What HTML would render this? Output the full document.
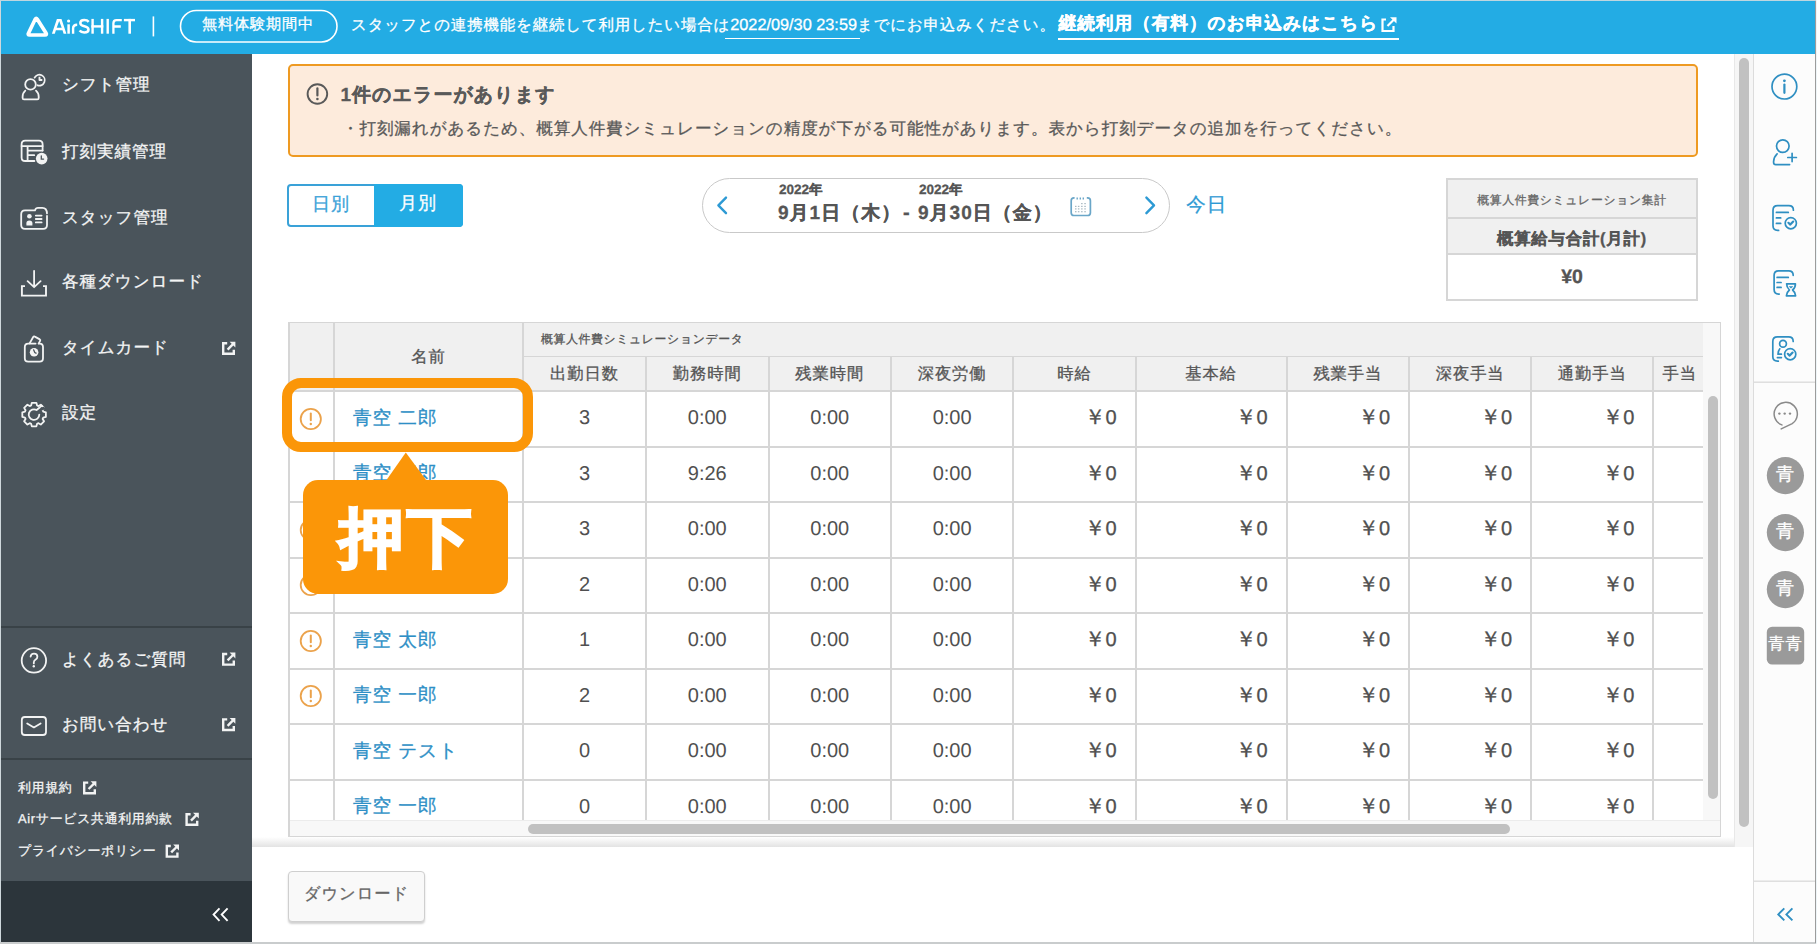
<!DOCTYPE html>
<html><head><meta charset="utf-8">
<style>
*{box-sizing:border-box;margin:0;padding:0}
html,body{width:1817px;height:944px;overflow:hidden;background:#cfd8dc;font-family:"Liberation Sans",sans-serif;text-rendering:geometricPrecision}
.a{position:absolute;white-space:nowrap;line-height:1;-webkit-text-stroke:0.3px currentColor}
.nk{-webkit-text-stroke:0}
.r{position:absolute}
.hw{color:#fff}
#hdr{left:1px;top:1px;width:1815px;height:53px;background:#23ace4}
#side{left:1px;top:54px;width:251px;height:888px;background:#4a545b}
#sidebot{left:1px;top:881px;width:251px;height:61px;background:#2c353b}
.dv{position:absolute;left:1px;width:251px;height:2px;background:#394247}
.mi{color:#f4f5f5;font-size:17.5px}
.sm{color:#f4f5f5;font-size:13.6px}
#main{left:252px;top:54px;width:1501px;height:888px;background:#fff}
#rp{left:1753px;top:54px;width:62px;height:888px;background:#fcfcfc;border-left:1px solid #dcdcdc}
#shadow{left:252px;top:837px;width:1501px;height:10px;background:linear-gradient(#fff,#e3e3e3)}
#vtrack{left:1734px;top:54px;width:19px;height:793px;background:#f6f6f6;border-left:1px solid #e8e8e8}
#vthumb{left:1739px;top:58px;width:10px;height:769px;background:#c1c1c1;border-radius:5px}
.k{-webkit-text-stroke:0.3px currentColor}
/*CSS*/
</style></head><body>
<div class="r" id="hdr"></div>
<div class="r" id="side"></div>
<div class="r" id="sidebot"></div>
<div class="dv" style="top:626px"></div>
<div class="dv" style="top:758px"></div>
<div class="r" id="main"></div>
<div class="r" style="left:287.5px;top:64px;width:1410.5px;height:93px;background:#fdebdc;border:2.7px solid #ee9a22;border-radius:5px"></div>
<svg class="r" style="left:300px;top:78px" width="36" height="32"><circle cx="17.4" cy="16" r="9.8" fill="none" stroke="#595959" stroke-width="1.9"/><path d="M17.4 10.4 V17.4" stroke="#595959" stroke-width="2.2" stroke-linecap="round"/><circle cx="17.4" cy="21" r="1.3" fill="#595959"/></svg>
<div class="a" style="left:340.5px;top:85.50px;font-size:19.00px;letter-spacing:0.0526em;font-weight:bold;color:#595959">1件のエラーがあります</div>
<div class="a" style="left:342px;top:121.44px;font-size:16.58px;letter-spacing:0.0526em;color:#595959">・打刻漏れがあるため、概算人件費シミュレーションの精度が下がる可能性があります。表から打刻データの追加を行ってください。</div>
<div class="r" style="left:287px;top:184px;width:176px;height:43px;border:2px solid #3aa2d8;border-radius:4px;background:#fff"></div>
<div class="r" style="left:374px;top:184px;width:89px;height:43px;background:#23ace4;border-radius:0 4px 4px 0"></div>
<div class="a" style="left:312px;top:194.67px;font-size:18.05px;letter-spacing:0.0526em;color:#3aa2d8">日別</div>
<div class="a" style="left:399px;top:194.47px;font-size:18.05px;letter-spacing:0.0526em;color:#fff">月別</div>
<div class="r" style="left:701.5px;top:178px;width:468px;height:55px;border:1.5px solid #c9c9c9;border-radius:28px;background:#fff"></div>
<svg class="r" style="left:700px;top:190px" width="480" height="32">
<path d="M26 7.6 L18.4 15.4 L26 23.2" fill="none" stroke="#2d9ad4" stroke-width="2.4" stroke-linecap="round" stroke-linejoin="round"/>
<path d="M446.4 7.6 L454 15.4 L446.4 23.2" fill="none" stroke="#2d9ad4" stroke-width="2.4" stroke-linecap="round" stroke-linejoin="round"/>
</svg>
<div class="a" style="left:779px;top:183px;font-size:13.5px;font-weight:bold;color:#555">2022年</div>
<div class="a" style="left:919px;top:183px;font-size:13.5px;font-weight:bold;color:#555">2022年</div>
<div class="a" style="left:778px;top:203.50px;font-size:19.00px;letter-spacing:0.0526em;font-weight:bold;color:#555">9月1日（木）</div>
<div class="a" style="left:903px;top:203px;font-size:20px;font-weight:bold;color:#555">-</div>
<div class="a" style="left:918px;top:203.50px;font-size:19.00px;letter-spacing:0.0526em;font-weight:bold;color:#555">9月30日（金）</div>
<svg class="r" style="left:1060px;top:185px" width="40" height="40">
<path d="M14.6 12.9 H14 Q11.2 12.9 11.2 15.7 V27.7 Q11.2 30.5 14 30.5 H27.6 Q30.4 30.5 30.4 27.7 V15.7 Q30.4 12.9 27.6 12.9 H26.8" fill="none" stroke="#6aa6c8" stroke-width="1.7"/>
<path d="M17.2 12.4 V14.6 M20.3 12.4 V14.6 M23.3 12.4 V14.6" stroke="#6aa6c8" stroke-width="1.4"/>
<g fill="#a9b9c2"><rect x="21.1" y="18.0" width="1.5" height="1.2"/><rect x="24.3" y="18.0" width="1.5" height="1.2"/><rect x="15.0" y="20.8" width="1.5" height="1.2"/><rect x="17.9" y="20.8" width="1.5" height="1.2"/><rect x="21.1" y="20.8" width="1.5" height="1.2"/><rect x="24.3" y="20.8" width="1.5" height="1.2"/><rect x="15.0" y="23.3" width="1.5" height="1.2"/><rect x="17.9" y="23.3" width="1.5" height="1.2"/><rect x="21.1" y="23.3" width="1.5" height="1.2"/><rect x="24.3" y="23.3" width="1.5" height="1.2"/><rect x="15.0" y="26.1" width="1.5" height="1.2"/><rect x="17.9" y="26.1" width="1.5" height="1.2"/><rect x="21.1" y="26.1" width="1.5" height="1.2"/><rect x="24.3" y="26.1" width="1.5" height="1.2"/></g>
</svg>
<div class="a" style="left:1186.3px;top:195.51px;font-size:19.47px;letter-spacing:0.0526em;color:#2d9ad4">今日</div>
<div class="r" style="left:1446px;top:178px;width:252px;height:123px;border:2px solid #d6d6d6;background:#fff"></div>
<div class="r" style="left:1448px;top:180px;width:248px;height:74px;background:#f0f0f0"></div>
<div class="r" style="left:1448px;top:216.5px;width:248px;height:2px;background:#d6d6d6"></div>
<div class="r" style="left:1448px;top:253px;width:248px;height:2px;background:#d6d6d6"></div>
<div class="a" style="left:1446px;width:252px;text-align:center;top:194.61px;font-size:11.88px;letter-spacing:0.0526em;color:#666">概算人件費シミュレーション集計</div>
<div class="a" style="left:1446px;width:252px;text-align:center;top:230.93px;font-size:16.34px;letter-spacing:0.0526em;font-weight:bold;color:#555">概算給与合計(月計)</div>
<div class="a" style="left:1446px;width:252px;text-align:center;top:267.8px;font-size:19.5px;font-weight:bold;color:#555">¥0</div>
<div class="r" style="left:288px;top:322px;width:1433px;height:515px;border:2px solid #d6d6d6;border-right-width:1px;background:#fafafa"></div>
<div class="r" style="left:290px;top:323px;width:1413px;height:68px;background:#f0f0f0"></div>
<div class="r" style="left:290px;top:391px;width:1413px;height:428.5px;background:#fff"></div>
<div class="r" style="left:333px;top:322px;width:1.5px;height:497.5px;background:#d6d6d6"></div>
<div class="r" style="left:522px;top:322px;width:1.5px;height:497.5px;background:#d6d6d6"></div>
<div class="r" style="left:645px;top:356px;width:1.5px;height:463.5px;background:#d6d6d6"></div>
<div class="r" style="left:768px;top:356px;width:1.5px;height:463.5px;background:#d6d6d6"></div>
<div class="r" style="left:890px;top:356px;width:1.5px;height:463.5px;background:#d6d6d6"></div>
<div class="r" style="left:1012px;top:356px;width:1.5px;height:463.5px;background:#d6d6d6"></div>
<div class="r" style="left:1135px;top:356px;width:1.5px;height:463.5px;background:#d6d6d6"></div>
<div class="r" style="left:1286px;top:356px;width:1.5px;height:463.5px;background:#d6d6d6"></div>
<div class="r" style="left:1408px;top:356px;width:1.5px;height:463.5px;background:#d6d6d6"></div>
<div class="r" style="left:1530px;top:356px;width:1.5px;height:463.5px;background:#d6d6d6"></div>
<div class="r" style="left:1652px;top:356px;width:1.5px;height:463.5px;background:#d6d6d6"></div>
<div class="r" style="left:523px;top:355.5px;width:1180px;height:1.5px;background:#d6d6d6"></div>
<div class="r" style="left:290px;top:390px;width:1413px;height:1.5px;background:#d6d6d6"></div>
<div class="r" style="left:290px;top:446px;width:1413px;height:1.5px;background:#d6d6d6"></div>
<div class="r" style="left:290px;top:501px;width:1413px;height:1.5px;background:#d6d6d6"></div>
<div class="r" style="left:290px;top:557px;width:1413px;height:1.5px;background:#d6d6d6"></div>
<div class="r" style="left:290px;top:612px;width:1413px;height:1.5px;background:#d6d6d6"></div>
<div class="r" style="left:290px;top:668px;width:1413px;height:1.5px;background:#d6d6d6"></div>
<div class="r" style="left:290px;top:723px;width:1413px;height:1.5px;background:#d6d6d6"></div>
<div class="r" style="left:290px;top:779px;width:1413px;height:1.5px;background:#d6d6d6"></div>
<div class="r" style="left:1703px;top:323px;width:17px;height:513px;background:#f8f8f8"></div>
<div class="r" style="left:290px;top:819.5px;width:1430px;height:16.5px;background:#f8f8f8;border-top:1px solid #ececec"></div>
<div class="a" style="left:334px;width:189px;text-align:center;top:348.93px;font-size:16.34px;letter-spacing:0.0526em;color:#555">名前</div>
<div class="a" style="left:541px;top:334.31px;font-size:11.88px;letter-spacing:0.0526em;color:#555">概算人件費シミュレーションデータ</div>
<div class="a" style="left:523px;width:123.0px;text-align:center;top:365.93px;font-size:16.34px;letter-spacing:0.0526em;color:#555">出勤日数</div>
<div class="a" style="left:646px;width:122.5px;text-align:center;top:365.93px;font-size:16.34px;letter-spacing:0.0526em;color:#555">勤務時間</div>
<div class="a" style="left:768.5px;width:122.5px;text-align:center;top:365.93px;font-size:16.34px;letter-spacing:0.0526em;color:#555">残業時間</div>
<div class="a" style="left:891px;width:122.2px;text-align:center;top:365.93px;font-size:16.34px;letter-spacing:0.0526em;color:#555">深夜労働</div>
<div class="a" style="left:1013.2px;width:122.4px;text-align:center;top:365.93px;font-size:16.34px;letter-spacing:0.0526em;color:#555">時給</div>
<div class="a" style="left:1135.6px;width:150.9px;text-align:center;top:365.93px;font-size:16.34px;letter-spacing:0.0526em;color:#555">基本給</div>
<div class="a" style="left:1286.5px;width:122.6px;text-align:center;top:365.93px;font-size:16.34px;letter-spacing:0.0526em;color:#555">残業手当</div>
<div class="a" style="left:1409.1px;width:122.1px;text-align:center;top:365.93px;font-size:16.34px;letter-spacing:0.0526em;color:#555">深夜手当</div>
<div class="a" style="left:1531.2px;width:122.1px;text-align:center;top:365.93px;font-size:16.34px;letter-spacing:0.0526em;color:#555">通勤手当</div>
<div class="a" style="left:1662.5px;top:365.93px;font-size:16.34px;letter-spacing:0.0526em;color:#555">手当</div>
<div class="r" style="left:0;top:0;width:1703px;height:819.5px;overflow:hidden"><svg class="r" style="left:298px;top:405.75px" width="26" height="26"><circle cx="12.8" cy="13" r="10.1" fill="none" stroke="#eba24b" stroke-width="1.8"/><path d="M12.8 7.6 V14.2" stroke="#eba24b" stroke-width="2" stroke-linecap="round"/><circle cx="12.8" cy="18" r="1.2" fill="#eba24b"/></svg><div class="a k" style="left:353px;top:408.74px;font-size:18.62px;letter-spacing:0.0526em;color:#2e8fc6">青空 二郎</div><div class="a nk" style="left:523px;width:123.0px;text-align:center;top:408.25px;font-size:20px;color:#505050">3</div><div class="a nk" style="left:646px;width:122.5px;text-align:center;top:408.25px;font-size:20px;color:#505050">0:00</div><div class="a nk" style="left:768.5px;width:122.5px;text-align:center;top:408.25px;font-size:20px;color:#505050">0:00</div><div class="a nk" style="left:891px;width:122.2px;text-align:center;top:408.25px;font-size:20px;color:#505050">0:00</div><div class="a" style="left:995.6px;width:121px;text-align:right;top:408.25px;font-size:20px;color:#505050"><span style="font-size:21px;line-height:0">￥</span>0</div><div class="a" style="left:1146.5px;width:121px;text-align:right;top:408.25px;font-size:20px;color:#505050"><span style="font-size:21px;line-height:0">￥</span>0</div><div class="a" style="left:1269.1px;width:121px;text-align:right;top:408.25px;font-size:20px;color:#505050"><span style="font-size:21px;line-height:0">￥</span>0</div><div class="a" style="left:1391.2px;width:121px;text-align:right;top:408.25px;font-size:20px;color:#505050"><span style="font-size:21px;line-height:0">￥</span>0</div><div class="a" style="left:1513.3px;width:121px;text-align:right;top:408.25px;font-size:20px;color:#505050"><span style="font-size:21px;line-height:0">￥</span>0</div><div class="a k" style="left:353px;top:464.24px;font-size:18.62px;letter-spacing:0.0526em;color:#2e8fc6">青空 三郎</div><div class="a nk" style="left:523px;width:123.0px;text-align:center;top:463.75px;font-size:20px;color:#505050">3</div><div class="a nk" style="left:646px;width:122.5px;text-align:center;top:463.75px;font-size:20px;color:#505050">9:26</div><div class="a nk" style="left:768.5px;width:122.5px;text-align:center;top:463.75px;font-size:20px;color:#505050">0:00</div><div class="a nk" style="left:891px;width:122.2px;text-align:center;top:463.75px;font-size:20px;color:#505050">0:00</div><div class="a" style="left:995.6px;width:121px;text-align:right;top:463.75px;font-size:20px;color:#505050"><span style="font-size:21px;line-height:0">￥</span>0</div><div class="a" style="left:1146.5px;width:121px;text-align:right;top:463.75px;font-size:20px;color:#505050"><span style="font-size:21px;line-height:0">￥</span>0</div><div class="a" style="left:1269.1px;width:121px;text-align:right;top:463.75px;font-size:20px;color:#505050"><span style="font-size:21px;line-height:0">￥</span>0</div><div class="a" style="left:1391.2px;width:121px;text-align:right;top:463.75px;font-size:20px;color:#505050"><span style="font-size:21px;line-height:0">￥</span>0</div><div class="a" style="left:1513.3px;width:121px;text-align:right;top:463.75px;font-size:20px;color:#505050"><span style="font-size:21px;line-height:0">￥</span>0</div><svg class="r" style="left:298px;top:516.75px" width="26" height="26"><circle cx="12.8" cy="13" r="10.1" fill="none" stroke="#eba24b" stroke-width="1.8"/><path d="M12.8 7.6 V14.2" stroke="#eba24b" stroke-width="2" stroke-linecap="round"/><circle cx="12.8" cy="18" r="1.2" fill="#eba24b"/></svg><div class="a k" style="left:353px;top:519.74px;font-size:18.62px;letter-spacing:0.0526em;color:#2e8fc6">青空 四郎</div><div class="a nk" style="left:523px;width:123.0px;text-align:center;top:519.25px;font-size:20px;color:#505050">3</div><div class="a nk" style="left:646px;width:122.5px;text-align:center;top:519.25px;font-size:20px;color:#505050">0:00</div><div class="a nk" style="left:768.5px;width:122.5px;text-align:center;top:519.25px;font-size:20px;color:#505050">0:00</div><div class="a nk" style="left:891px;width:122.2px;text-align:center;top:519.25px;font-size:20px;color:#505050">0:00</div><div class="a" style="left:995.6px;width:121px;text-align:right;top:519.25px;font-size:20px;color:#505050"><span style="font-size:21px;line-height:0">￥</span>0</div><div class="a" style="left:1146.5px;width:121px;text-align:right;top:519.25px;font-size:20px;color:#505050"><span style="font-size:21px;line-height:0">￥</span>0</div><div class="a" style="left:1269.1px;width:121px;text-align:right;top:519.25px;font-size:20px;color:#505050"><span style="font-size:21px;line-height:0">￥</span>0</div><div class="a" style="left:1391.2px;width:121px;text-align:right;top:519.25px;font-size:20px;color:#505050"><span style="font-size:21px;line-height:0">￥</span>0</div><div class="a" style="left:1513.3px;width:121px;text-align:right;top:519.25px;font-size:20px;color:#505050"><span style="font-size:21px;line-height:0">￥</span>0</div><svg class="r" style="left:298px;top:572.25px" width="26" height="26"><circle cx="12.8" cy="13" r="10.1" fill="none" stroke="#eba24b" stroke-width="1.8"/><path d="M12.8 7.6 V14.2" stroke="#eba24b" stroke-width="2" stroke-linecap="round"/><circle cx="12.8" cy="18" r="1.2" fill="#eba24b"/></svg><div class="a k" style="left:353px;top:575.24px;font-size:18.62px;letter-spacing:0.0526em;color:#2e8fc6">青空 五郎</div><div class="a nk" style="left:523px;width:123.0px;text-align:center;top:574.75px;font-size:20px;color:#505050">2</div><div class="a nk" style="left:646px;width:122.5px;text-align:center;top:574.75px;font-size:20px;color:#505050">0:00</div><div class="a nk" style="left:768.5px;width:122.5px;text-align:center;top:574.75px;font-size:20px;color:#505050">0:00</div><div class="a nk" style="left:891px;width:122.2px;text-align:center;top:574.75px;font-size:20px;color:#505050">0:00</div><div class="a" style="left:995.6px;width:121px;text-align:right;top:574.75px;font-size:20px;color:#505050"><span style="font-size:21px;line-height:0">￥</span>0</div><div class="a" style="left:1146.5px;width:121px;text-align:right;top:574.75px;font-size:20px;color:#505050"><span style="font-size:21px;line-height:0">￥</span>0</div><div class="a" style="left:1269.1px;width:121px;text-align:right;top:574.75px;font-size:20px;color:#505050"><span style="font-size:21px;line-height:0">￥</span>0</div><div class="a" style="left:1391.2px;width:121px;text-align:right;top:574.75px;font-size:20px;color:#505050"><span style="font-size:21px;line-height:0">￥</span>0</div><div class="a" style="left:1513.3px;width:121px;text-align:right;top:574.75px;font-size:20px;color:#505050"><span style="font-size:21px;line-height:0">￥</span>0</div><svg class="r" style="left:298px;top:627.75px" width="26" height="26"><circle cx="12.8" cy="13" r="10.1" fill="none" stroke="#eba24b" stroke-width="1.8"/><path d="M12.8 7.6 V14.2" stroke="#eba24b" stroke-width="2" stroke-linecap="round"/><circle cx="12.8" cy="18" r="1.2" fill="#eba24b"/></svg><div class="a k" style="left:353px;top:630.74px;font-size:18.62px;letter-spacing:0.0526em;color:#2e8fc6">青空 太郎</div><div class="a nk" style="left:523px;width:123.0px;text-align:center;top:630.25px;font-size:20px;color:#505050">1</div><div class="a nk" style="left:646px;width:122.5px;text-align:center;top:630.25px;font-size:20px;color:#505050">0:00</div><div class="a nk" style="left:768.5px;width:122.5px;text-align:center;top:630.25px;font-size:20px;color:#505050">0:00</div><div class="a nk" style="left:891px;width:122.2px;text-align:center;top:630.25px;font-size:20px;color:#505050">0:00</div><div class="a" style="left:995.6px;width:121px;text-align:right;top:630.25px;font-size:20px;color:#505050"><span style="font-size:21px;line-height:0">￥</span>0</div><div class="a" style="left:1146.5px;width:121px;text-align:right;top:630.25px;font-size:20px;color:#505050"><span style="font-size:21px;line-height:0">￥</span>0</div><div class="a" style="left:1269.1px;width:121px;text-align:right;top:630.25px;font-size:20px;color:#505050"><span style="font-size:21px;line-height:0">￥</span>0</div><div class="a" style="left:1391.2px;width:121px;text-align:right;top:630.25px;font-size:20px;color:#505050"><span style="font-size:21px;line-height:0">￥</span>0</div><div class="a" style="left:1513.3px;width:121px;text-align:right;top:630.25px;font-size:20px;color:#505050"><span style="font-size:21px;line-height:0">￥</span>0</div><svg class="r" style="left:298px;top:683.25px" width="26" height="26"><circle cx="12.8" cy="13" r="10.1" fill="none" stroke="#eba24b" stroke-width="1.8"/><path d="M12.8 7.6 V14.2" stroke="#eba24b" stroke-width="2" stroke-linecap="round"/><circle cx="12.8" cy="18" r="1.2" fill="#eba24b"/></svg><div class="a k" style="left:353px;top:686.24px;font-size:18.62px;letter-spacing:0.0526em;color:#2e8fc6">青空 一郎</div><div class="a nk" style="left:523px;width:123.0px;text-align:center;top:685.75px;font-size:20px;color:#505050">2</div><div class="a nk" style="left:646px;width:122.5px;text-align:center;top:685.75px;font-size:20px;color:#505050">0:00</div><div class="a nk" style="left:768.5px;width:122.5px;text-align:center;top:685.75px;font-size:20px;color:#505050">0:00</div><div class="a nk" style="left:891px;width:122.2px;text-align:center;top:685.75px;font-size:20px;color:#505050">0:00</div><div class="a" style="left:995.6px;width:121px;text-align:right;top:685.75px;font-size:20px;color:#505050"><span style="font-size:21px;line-height:0">￥</span>0</div><div class="a" style="left:1146.5px;width:121px;text-align:right;top:685.75px;font-size:20px;color:#505050"><span style="font-size:21px;line-height:0">￥</span>0</div><div class="a" style="left:1269.1px;width:121px;text-align:right;top:685.75px;font-size:20px;color:#505050"><span style="font-size:21px;line-height:0">￥</span>0</div><div class="a" style="left:1391.2px;width:121px;text-align:right;top:685.75px;font-size:20px;color:#505050"><span style="font-size:21px;line-height:0">￥</span>0</div><div class="a" style="left:1513.3px;width:121px;text-align:right;top:685.75px;font-size:20px;color:#505050"><span style="font-size:21px;line-height:0">￥</span>0</div><div class="a k" style="left:353px;top:741.74px;font-size:18.62px;letter-spacing:0.0526em;color:#2e8fc6">青空 テスト</div><div class="a nk" style="left:523px;width:123.0px;text-align:center;top:741.25px;font-size:20px;color:#505050">0</div><div class="a nk" style="left:646px;width:122.5px;text-align:center;top:741.25px;font-size:20px;color:#505050">0:00</div><div class="a nk" style="left:768.5px;width:122.5px;text-align:center;top:741.25px;font-size:20px;color:#505050">0:00</div><div class="a nk" style="left:891px;width:122.2px;text-align:center;top:741.25px;font-size:20px;color:#505050">0:00</div><div class="a" style="left:995.6px;width:121px;text-align:right;top:741.25px;font-size:20px;color:#505050"><span style="font-size:21px;line-height:0">￥</span>0</div><div class="a" style="left:1146.5px;width:121px;text-align:right;top:741.25px;font-size:20px;color:#505050"><span style="font-size:21px;line-height:0">￥</span>0</div><div class="a" style="left:1269.1px;width:121px;text-align:right;top:741.25px;font-size:20px;color:#505050"><span style="font-size:21px;line-height:0">￥</span>0</div><div class="a" style="left:1391.2px;width:121px;text-align:right;top:741.25px;font-size:20px;color:#505050"><span style="font-size:21px;line-height:0">￥</span>0</div><div class="a" style="left:1513.3px;width:121px;text-align:right;top:741.25px;font-size:20px;color:#505050"><span style="font-size:21px;line-height:0">￥</span>0</div><div class="a k" style="left:353px;top:797.24px;font-size:18.62px;letter-spacing:0.0526em;color:#2e8fc6">青空 一郎</div><div class="a nk" style="left:523px;width:123.0px;text-align:center;top:796.75px;font-size:20px;color:#505050">0</div><div class="a nk" style="left:646px;width:122.5px;text-align:center;top:796.75px;font-size:20px;color:#505050">0:00</div><div class="a nk" style="left:768.5px;width:122.5px;text-align:center;top:796.75px;font-size:20px;color:#505050">0:00</div><div class="a nk" style="left:891px;width:122.2px;text-align:center;top:796.75px;font-size:20px;color:#505050">0:00</div><div class="a" style="left:995.6px;width:121px;text-align:right;top:796.75px;font-size:20px;color:#505050"><span style="font-size:21px;line-height:0">￥</span>0</div><div class="a" style="left:1146.5px;width:121px;text-align:right;top:796.75px;font-size:20px;color:#505050"><span style="font-size:21px;line-height:0">￥</span>0</div><div class="a" style="left:1269.1px;width:121px;text-align:right;top:796.75px;font-size:20px;color:#505050"><span style="font-size:21px;line-height:0">￥</span>0</div><div class="a" style="left:1391.2px;width:121px;text-align:right;top:796.75px;font-size:20px;color:#505050"><span style="font-size:21px;line-height:0">￥</span>0</div><div class="a" style="left:1513.3px;width:121px;text-align:right;top:796.75px;font-size:20px;color:#505050"><span style="font-size:21px;line-height:0">￥</span>0</div></div>
<div class="r" style="left:1708px;top:396px;width:9.6px;height:403px;background:#c1c1c1;border-radius:5px"></div>
<div class="r" style="left:528px;top:824px;width:982px;height:10px;background:#c1c1c1;border-radius:5px"></div>
<div class="r" style="left:282px;top:378px;width:251px;height:74px;border:10px solid #fb9608;border-radius:19px"></div>
<svg class="r" style="left:380px;top:450px" width="52" height="34"><path d="M5.8 31 L25.8 2.4 L46.8 31Z" fill="#fb9608"/></svg>
<div class="r" style="left:303px;top:480px;width:205px;height:114px;background:#fb9608;border-radius:15px"></div>
<div class="a" style="left:339px;top:505.70px;font-size:64.60px;letter-spacing:0.0526em;font-weight:bold;color:#fff;-webkit-text-stroke:2.4px #fff">押下</div>
<div class="r" style="left:288px;top:871px;width:137px;height:51px;background:#f9f9f9;border:1.5px solid #cfcfcf;border-radius:4px;box-shadow:0 2px 2px rgba(0,0,0,.18)"></div>
<div class="a" style="left:288px;width:137px;text-align:center;top:886.43px;font-size:16.34px;letter-spacing:0.0526em;color:#666">ダウンロード</div>
<div class="r" id="shadow"></div>
<div class="r" id="vtrack"></div>
<div class="r" id="vthumb"></div>
<div class="r" id="rp"></div>
<svg class="r" style="left:0;top:0" width="1817" height="944">
 <rect x="1754" y="381.5" width="61" height="1.4" fill="#dcdcdc"/>
 <rect x="1754" y="880.5" width="61" height="1.4" fill="#dcdcdc"/>
 <g fill="none" stroke="#2f8fc2" stroke-width="1.7" stroke-linecap="round" stroke-linejoin="round">
  <circle cx="1784.4" cy="86.6" r="12.4"/>
  <path d="M1784.4 84.6 V92.8" stroke-width="2.2"/>
  <circle cx="1782.8" cy="146.1" r="6.3"/>
  <path d="M1777.1 153.8 Q1773.6 157.2 1773.6 161.6 V162.4 Q1773.6 164.6 1775.8 164.6 H1789.6"/>
  <path d="M1787.8 157.5 H1796.4 M1792.1 153.3 V161.6"/>
  <!-- doc check -->
  <path d="M1778.6 230.4 H1777.6 Q1773 230.4 1773 225.8 V210.2 Q1773 205.6 1777.6 205.6 H1788.8 Q1793.4 205.6 1793.4 210.2"/>
  <path d="M1776.4 212.4 H1788.3 M1776.4 217.9 H1780.7 M1776.4 223.4 H1780.7"/>
  <circle cx="1790.8" cy="223.2" r="5.6"/>
  <path d="M1788.4 222.8 L1790.3 224.6 L1793.2 221.6" stroke-width="2.2"/>
  <!-- doc hourglass -->
  <path d="M1779.2 294.1 H1778.6 Q1774.1 294.1 1774.1 289.6 V275.3 Q1774.1 270.8 1778.6 270.8 H1788.7 Q1793.2 270.8 1793.2 275.3"/>
  <path d="M1777.1 277.4 H1788.3 M1777.1 282.5 H1781.1 M1777.1 287.4 H1781.1"/>
  <path d="M1786.6 283.8 H1795.4 Q1795.6 287.4 1792.6 290 Q1795.6 292.6 1795.6 295.8 H1786.4 Q1786.4 292.6 1789.4 290 Q1786.6 287.4 1786.6 283.8Z"/>
  <!-- person doc check -->
  <path d="M1778.3 361.2 H1777.4 Q1772.8 361.2 1772.8 356.6 V341.4 Q1772.8 336.8 1777.4 336.8 H1788.6 Q1793.2 336.8 1793.2 341.4"/>
  <circle cx="1783" cy="343.8" r="3.4"/>
  <path d="M1779.8 348.8 Q1778 351 1778 354.2 H1781.4 M1777.4 357.6 H1781.4"/>
  <circle cx="1790.2" cy="354.2" r="5.6"/>
  <path d="M1787.8 353.8 L1789.7 355.6 L1792.6 352.6" stroke-width="2.2"/>
 </g>
 <g fill="#2f8fc2">
  <circle cx="1784.4" cy="80.8" r="1.4"/>
  <path d="M1788.6 286.2 H1793.4 L1791 288.6Z"/>
 </g>
 <g fill="none" stroke="#8a8a8a" stroke-width="1.5" stroke-linecap="round">
  <path d="M1781.9 424.9 A11.6 11.6 0 1 1 1792.2 423.6 L1781.2 428.9"/>
 </g>
 <g fill="#8a8a8a"><circle cx="1779.4" cy="413.6" r="1.2"/><circle cx="1784.7" cy="413.6" r="1.2"/><circle cx="1790" cy="413.6" r="1.2"/></g>
 <g fill="#9a9a9a">
  <circle cx="1785.4" cy="475.6" r="18.6"/>
  <circle cx="1785.4" cy="532.6" r="18.6"/>
  <circle cx="1785.4" cy="589.6" r="18.6"/>
  <rect x="1766.8" y="626.8" width="37.4" height="37.8" rx="5.3"/>
 </g>
 <path d="M1784.3 908.4 L1778.3 914.4 L1784.3 920.4 M1792.4 908.4 L1786.4 914.4 L1792.4 920.4" fill="none" stroke="#2f8fc2" stroke-width="1.9"/>
</svg>
<div class="a" style="left:1766px;width:39px;text-align:center;top:465.48px;font-size:18.05px;letter-spacing:0.0526em;color:#fff">青</div>
<div class="a" style="left:1766px;width:39px;text-align:center;top:522.48px;font-size:18.05px;letter-spacing:0.0526em;color:#fff">青</div>
<div class="a" style="left:1766px;width:39px;text-align:center;top:579.48px;font-size:18.05px;letter-spacing:0.0526em;color:#fff">青</div>
<div class="a" style="left:1766px;width:39px;text-align:center;top:636.43px;font-size:16.34px;letter-spacing:0.0526em;color:#fff">青青</div>

<div class="r" style="left:0;top:0;width:1817px;height:1px;background:#bfd6df"></div>
<div class="r" style="left:0;top:942px;width:1817px;height:2px;background:#c9cccd"></div>
<div class="r" style="left:1815px;top:1px;width:1px;height:942px;background:#9c9c9c"></div>
<div class="r" style="left:1816px;top:0;width:1px;height:944px;background:#eef5f8"></div>
<!-- HEADER -->
<svg class="r" style="left:0;top:0" width="1817" height="54">
  <path d="M37.3 19.2 L46 33 Q47.2 35 45 35 H29.6 Q27.4 35 28.6 33 L35.2 19.2 Q36.2 17.6 37.3 19.2Z" fill="none" stroke="#fff" stroke-width="3.7" stroke-linejoin="round"/>
  <path fill="#fff" fill-rule="evenodd" d="M51.9 33.7 L56.9 18.9 H61.5 L66.4 33.7 H63.6 L62.5 30.3 H55.9 L54.8 33.7 Z M56.7 27.7 H61.7 L59.2 20.9 Z"/>
  <circle cx="68.6" cy="21" r="1.6" fill="#fff"/>
  <rect x="67.35" y="24.3" width="2.5" height="9.4" fill="#fff"/>
  <path d="M73.1 33.7 V28.6 Q73.1 24.7 77.2 24.7" fill="none" stroke="#fff" stroke-width="2.4"/>
  <path d="M88.7 21.8 Q87.2 20.1 84.3 20.1 Q80.3 20.1 80.3 23.1 Q80.3 25.5 84.3 26.3 Q88.5 27.1 88.5 29.8 Q88.5 32.5 84.3 32.5 Q81.1 32.5 79.6 30.6" fill="none" stroke="#fff" stroke-width="2.5"/>
  <g fill="#fff">
   <rect x="91.4" y="18.9" width="2.4" height="14.8"/><rect x="100.9" y="18.9" width="2.4" height="14.8"/><rect x="91.4" y="25.2" width="11.9" height="2.4"/>
   <rect x="106.5" y="18.9" width="2.4" height="14.8"/>
   <rect x="123.9" y="18.9" width="11.1" height="2.4"/><rect x="128.4" y="18.9" width="2.6" height="14.8"/>
  </g>
  <path d="M113.4 33.7 V23.2 Q113.4 20.1 116.5 20.1 H121.8 M113.4 26.5 H120.8" fill="none" stroke="#fff" stroke-width="2.3"/>
  <circle cx="69" cy="20.2" r="0" fill="#fff"/>
  <rect x="152.6" y="16.4" width="1.6" height="20" fill="#fff"/>
  <rect x="180.5" y="10.5" width="156.5" height="31.5" rx="15.75" fill="none" stroke="#fff" stroke-width="1.6"/>
</svg>
<div class="a hw" style="left:202px;top:17.40px;font-size:15.20px;letter-spacing:0.0526em">無料体験期間中</div>
<div class="a hw" style="left:351px;top:17.41px;font-size:15.48px;letter-spacing:0.0526em">スタッフとの連携機能を継続して利用したい場合は<span id="dt" style="letter-spacing:0;font-size:1.0526em">2022/09/30 23:59</span>までにお申込みください。</div>
<div class="r" style="left:725px;top:37.5px;width:135px;height:1.5px;background:#fff"></div>
<div class="a hw" id="cont" style="left:1058.5px;top:15.47px;font-size:17.72px;letter-spacing:0.0526em;font-weight:bold">継続利用（有料）のお申込みはこちら</div>
<svg class="r" style="left:1378px;top:14px" width="22" height="20" viewBox="0 0 22 20">
  <path d="M8 5.5 H4.5 V17 H15.5 V12" fill="none" stroke="#fff" stroke-width="2.2"/>
  <path d="M9.5 12 L16 5.5" stroke="#fff" stroke-width="2.2"/>
  <path d="M12 3.2 H18.5 V9.6Z" fill="#fff"/>
</svg>
<div class="r" style="left:1057.5px;top:38.4px;width:341px;height:1.7px;background:#fff"></div>

<!-- SIDEBAR -->
<svg class="r" style="left:0;top:0" width="252" height="944">
 <g fill="none" stroke="#f2f3f3" stroke-width="1.8" stroke-linecap="round" stroke-linejoin="round">
  <!-- shift icon -->
  <circle cx="30.5" cy="84.4" r="5.3"/>
  <path d="M25.3 90.6 Q22.6 93 22.6 96.8 V98 Q22.6 99.4 24 99.4 H37.3 Q38.7 99.4 38.7 98 V96.8 Q38.7 93 36 90.6"/>
  <path d="M34.6 77.6 A5.4 5.4 0 1 1 37.6 85.3"/>
  <path d="M39.5 76.8 V80 H42.3" stroke-width="1.9" stroke-linecap="butt"/>
  <!-- 打刻実績 icon -->
  <path d="M42.6 150.6 V144.2 Q42.6 140.6 39 140.6 H25.2 Q21.6 140.6 21.6 144.2 V157.4 Q21.6 161 25.2 161 H34.4"/>
  <path d="M21.6 146.1 H42.6 M27.6 150.6 H42.6 M27.6 155.2 H34.2 M27.6 146.1 V161"/>
  <!-- staff icon -->
  <path d="M47 213.4 Q46.8 207.8 42.4 207.8 H37.8 Q36.2 207.8 35.6 209 L35 210.4 H25 Q21.2 210.4 21.2 214.2 V225 Q21.2 228.8 25 228.8 H43.2 Q47 228.8 47 225 V215.8"/>
  <path d="M35.8 215.6 H41.6 M35.8 219 H41.6 M35.8 222.4 H41.6"/>
  <!-- download -->
  <path d="M34.1 270.8 V287 M27.6 281.2 L34.1 287.2 L40.6 281.2"/>
  <path d="M25 286.1 H21.9 V295.6 H46 V286.1 H43" stroke-linecap="butt" stroke-linejoin="miter" stroke-width="1.9"/>
  <!-- timecard -->
  <path d="M29.6 343.4 L33.2 337 Q33.8 336 34.8 336.6 L39.8 339.4 Q40.6 339.9 40.2 340.7 L38.8 343.4"/>
  <path d="M35.6 343.6 H28.2 Q24.8 343.6 24.8 347 V358.2 Q24.8 361.6 28.2 361.6 H39.6 Q43 361.6 43 358.2 V347 Q43 343.6 39.6 343.6 H38.6"/>
  <!-- gear -->
  <path transform="translate(34.1 414.6)" d="M-2.97 -9.13 L-2.29 -11.78 L2.29 -11.78 L2.97 -9.13 L4.36 -8.55 L6.71 -9.95 L9.95 -6.71 L8.55 -4.36 L9.13 -2.97 L11.78 -2.29 L11.78 2.29 L9.13 2.97 L8.55 4.36 L9.95 6.71 L6.71 9.95 L4.36 8.55 L2.97 9.13 L2.29 11.78 L-2.29 11.78 L-2.97 9.13 L-4.36 8.55 L-6.71 9.95 L-9.95 6.71 L-8.55 4.36 L-9.13 2.97 L-11.78 2.29 L-11.78 -2.29 L-9.13 -2.97 L-8.55 -4.36 L-9.95 -6.71 L-6.71 -9.95 L-4.36 -8.55Z"/>
  <path d="M39.3 414.6 A5.3 5.3 0 1 1 36.6 410 L41.8 405.8"/>
  <!-- question -->
  <circle cx="33.9" cy="660.4" r="12.2"/>
  <path d="M30.6 656.6 Q30.9 653.6 34 653.6 Q37.4 653.6 37.4 656.8 Q37.4 658.6 35.4 659.8 Q33.8 660.8 33.8 662.6 V663.4"/>
  <!-- mail -->
  <rect x="21.8" y="717" width="24.2" height="18" rx="3"/>
  <path d="M27.2 723.4 L33.9 727.4 L40.6 723.4"/>
 </g>
 <!-- gear gap -->
 <rect x="41" y="407" width="4" height="3" fill="#4a545b" transform="rotate(-20 43 408.5)"/>
 <!-- filled parts -->
 <g fill="#f2f3f3">
  <circle cx="41.7" cy="158.6" r="5.8"/>
  <circle cx="29.4" cy="216.3" r="2.3"/>
  <path d="M26.4 225.6 V223.2 Q26.4 220.4 29.4 220.4 Q32.4 220.4 32.4 223.2 V225.6Z"/>
  <circle cx="34.1" cy="352.2" r="4.3"/>
  <circle cx="33.8" cy="666.2" r="1.2"/>
 </g>
 <g fill="none" stroke="#4a545b" stroke-width="1.3" stroke-linecap="round">
  <path d="M41.3 155.8 V159.1 H43.6"/>
  <path d="M33.6 349.8 L34.8 352.6 L36 353.2"/>
 </g>
 <!-- ext link icons -->
 <g id="ext"></g>
</svg>
<div class="a mi k" style="left:62px;top:77.24px;font-size:16.62px;letter-spacing:0.0526em">シフト管理</div>
<div class="a mi k" style="left:62px;top:144.14px;font-size:16.62px;letter-spacing:0.0526em">打刻実績管理</div>
<div class="a mi k" style="left:62px;top:209.94px;font-size:16.62px;letter-spacing:0.0526em">スタッフ管理</div>
<div class="a mi k" style="left:62px;top:274.04px;font-size:16.62px;letter-spacing:0.0526em">各種ダウンロード</div>
<div class="a mi k" style="left:62px;top:339.94px;font-size:16.62px;letter-spacing:0.0526em">タイムカード</div>
<div class="a mi k" style="left:62px;top:405.44px;font-size:16.62px;letter-spacing:0.0526em">設定</div>
<div class="a mi k" style="left:62px;top:651.64px;font-size:16.62px;letter-spacing:0.0526em">よくあるご質問</div>
<div class="a mi k" style="left:62px;top:716.64px;font-size:16.62px;letter-spacing:0.0526em">お問い合わせ</div>
<div class="a sm k" style="left:18px;top:782.34px;font-size:12.92px;letter-spacing:0.0526em">利用規約</div>
<div class="a sm k" style="left:18px;top:813.34px;font-size:12.92px;letter-spacing:0.0526em">Airサービス共通利用約款</div>
<div class="a sm k" style="left:18px;top:845.14px;font-size:12.92px;letter-spacing:0.0526em">プライバシーポリシー</div>
<svg class="r" style="left:0;top:0" width="252" height="944">
 <defs>
  <g id="xl">
   <path d="M5.2 1.6 H1.2 V12.2 H11.8 V8.2" fill="none" stroke="#f2f3f3" stroke-width="2.4" stroke-linejoin="miter"/>
   <path d="M5.6 8 L11 2.6" stroke="#f2f3f3" stroke-width="2.4"/>
   <path d="M7.6 0.2 H13.4 V6Z" fill="#f2f3f3"/>
  </g>
 </defs>
 <use href="#xl" x="222" y="341.6"/>
 <use href="#xl" x="222" y="652.4"/>
 <use href="#xl" x="222" y="717.8"/>
 <use href="#xl" x="83" y="781"/>
 <use href="#xl" x="185.4" y="812.6"/>
 <use href="#xl" x="165.6" y="844.4"/>
 <path d="M219.5 908.4 L213.6 914.6 L219.5 920.8 M227.6 908.4 L221.7 914.6 L227.6 920.8" fill="none" stroke="#fff" stroke-width="1.9"/>
</svg>

</body></html>
